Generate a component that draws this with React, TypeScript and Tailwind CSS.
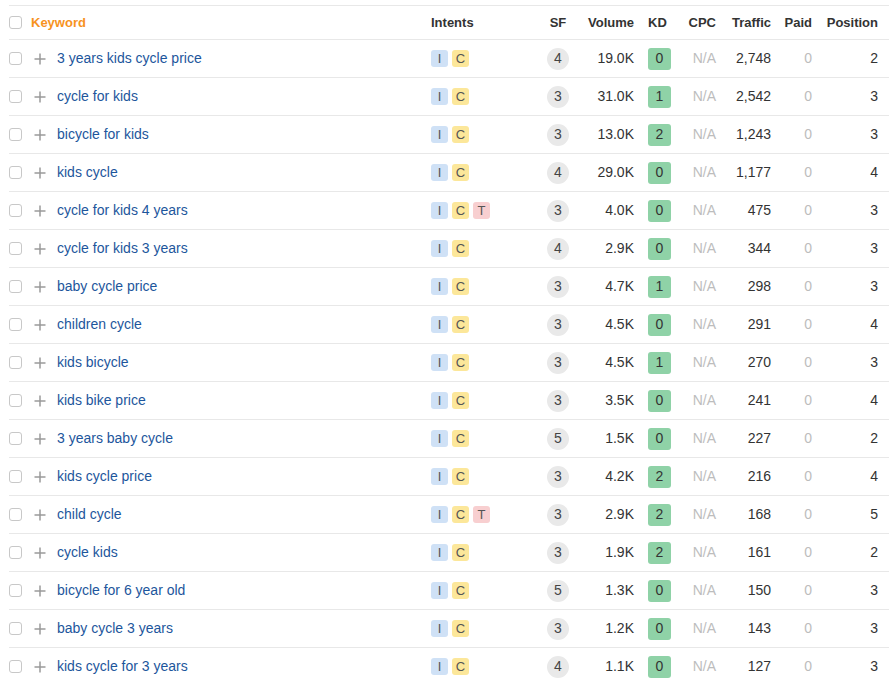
const rows = [
  { kw: '3 years kids cycle price', intents: ['I', 'C'], sf: 4, vol: '19.0K', kd: 0, traffic: '2,748', pos: 2 },
  { kw: 'cycle for kids', intents: ['I', 'C'], sf: 3, vol: '31.0K', kd: 1, traffic: '2,542', pos: 3 },
  { kw: 'bicycle for kids', intents: ['I', 'C'], sf: 3, vol: '13.0K', kd: 2, traffic: '1,243', pos: 3 },
  { kw: 'kids cycle', intents: ['I', 'C'], sf: 4, vol: '29.0K', kd: 0, traffic: '1,177', pos: 4 },
  { kw: 'cycle for kids 4 years', intents: ['I', 'C', 'T'], sf: 3, vol: '4.0K', kd: 0, traffic: '475', pos: 3 },
  { kw: 'cycle for kids 3 years', intents: ['I', 'C'], sf: 4, vol: '2.9K', kd: 0, traffic: '344', pos: 3 },
  { kw: 'baby cycle price', intents: ['I', 'C'], sf: 3, vol: '4.7K', kd: 1, traffic: '298', pos: 3 },
  { kw: 'children cycle', intents: ['I', 'C'], sf: 3, vol: '4.5K', kd: 0, traffic: '291', pos: 4 },
  { kw: 'kids bicycle', intents: ['I', 'C'], sf: 3, vol: '4.5K', kd: 1, traffic: '270', pos: 3 },
  { kw: 'kids bike price', intents: ['I', 'C'], sf: 3, vol: '3.5K', kd: 0, traffic: '241', pos: 4 },
  { kw: '3 years baby cycle', intents: ['I', 'C'], sf: 5, vol: '1.5K', kd: 0, traffic: '227', pos: 2 },
  { kw: 'kids cycle price', intents: ['I', 'C'], sf: 3, vol: '4.2K', kd: 2, traffic: '216', pos: 4 },
  { kw: 'child cycle', intents: ['I', 'C', 'T'], sf: 3, vol: '2.9K', kd: 2, traffic: '168', pos: 5 },
  { kw: 'cycle kids', intents: ['I', 'C'], sf: 3, vol: '1.9K', kd: 2, traffic: '161', pos: 2 },
  { kw: 'bicycle for 6 year old', intents: ['I', 'C'], sf: 5, vol: '1.3K', kd: 0, traffic: '150', pos: 3 },
  { kw: 'baby cycle 3 years', intents: ['I', 'C'], sf: 3, vol: '1.2K', kd: 0, traffic: '143', pos: 3 },
  { kw: 'kids cycle for 3 years', intents: ['I', 'C'], sf: 4, vol: '1.1K', kd: 0, traffic: '127', pos: 3 },
];

const intentColor: Record<string, string> = {
  I: 'bg-[#cfe1f6]',
  C: 'bg-[#fce79a]',
  T: 'bg-[#f8cfd0]',
};

function Checkbox() {
  return <span className="block w-[13px] h-[13px] shrink-0 rounded-[3px] border border-[#c8c8c8] bg-white" />;
}

function Plus() {
  return (
    <svg width="12" height="12" viewBox="0 0 12 12" className="shrink-0 block">
      <path d="M6 0.5v11M0.5 6h11" stroke="#9a9a9a" strokeWidth="1.5" />
    </svg>
  );
}

export default function App() {
  return (
    <div className="w-[889px] h-[682px] overflow-hidden bg-white pt-[5px] pl-[9px] font-['Liberation_Sans',Arial,sans-serif] text-[14px] text-[#333]">
      <div className="border-t border-[#e8e8e8]">
        <div className="flex items-center h-[34px] border-b border-[#e8e8e8] text-[13px] font-bold text-[#333]">
          <div className="w-[422px] flex items-center">
            <Checkbox />
            <span className="ml-[9px] text-[#f7931e]">Keyword</span>
          </div>
          <div className="w-[109px]">Intents</div>
          <div className="w-[36px] text-center">SF</div>
          <div className="w-[58px] text-right">Volume</div>
          <div className="w-[45px] pl-[14px]">KD</div>
          <div className="w-[37px] text-right">CPC</div>
          <div className="w-[55px] text-right">Traffic</div>
          <div className="w-[41px] text-right">Paid</div>
          <div className="w-[66px] text-right">Position</div>
        </div>
        {rows.map((r) => (
          <div key={r.kw} className="flex items-center h-[38px] border-b border-[#e8e8e8]">
            <div className="w-[422px] flex items-center">
              <Checkbox />
              <span className="ml-[12px]"><Plus /></span>
              <span className="ml-[11px] text-[#1d569c]">{r.kw}</span>
            </div>
            <div className="w-[109px] flex items-center gap-[4px]">
              {r.intents.map((i) => (
                <span key={i} className={`${intentColor[i]} w-[17px] h-[17px] rounded-[3px] text-[13px] leading-[17px] text-center text-[#555]`}>
                  {i}
                </span>
              ))}
            </div>
            <div className="w-[36px] flex justify-center">
              <span className="w-[22px] h-[22px] rounded-full bg-[#e9e9e9] flex items-center justify-center text-[14px] text-[#444]">
                {r.sf}
              </span>
            </div>
            <div className="w-[58px] text-right">{r.vol}</div>
            <div className="w-[45px] pl-[14px]">
              <span className="w-[23px] h-[22px] rounded-[3px] bg-[#8fd2a7] flex items-center justify-center text-[#333]">{r.kd}</span>
            </div>
            <div className="w-[37px] text-right text-[#bdbdbd]">N/A</div>
            <div className="w-[55px] text-right">{r.traffic}</div>
            <div className="w-[41px] text-right text-[#bdbdbd]">0</div>
            <div className="w-[66px] text-right">{r.pos}</div>
          </div>
        ))}
      </div>
    </div>
  );
}
